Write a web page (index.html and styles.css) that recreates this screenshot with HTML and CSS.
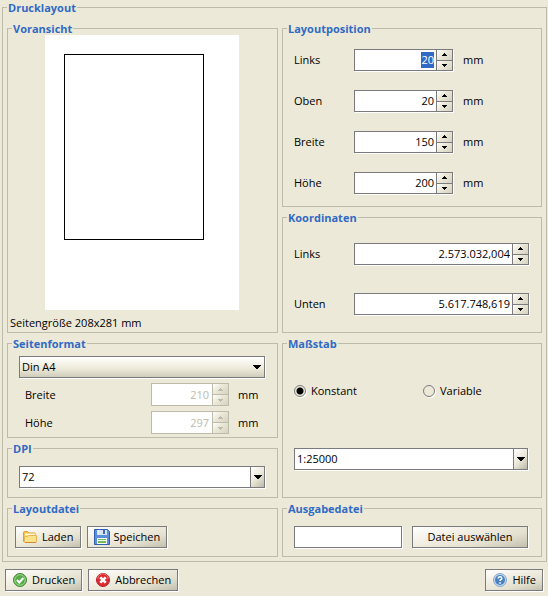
FILE: index.html
```html
<!DOCTYPE html>
<html lang="de">
<head>
<meta charset="utf-8">
<title>Drucklayout</title>
<link rel="stylesheet" href="styles.css">
</head>
<body>
<svg class="sprites" aria-hidden="true">
  <symbol id="up" viewBox="0 0 5 3"><path d="M2 0h1v1h1v1h1v1H0V2h1V1h1z"/></symbol>
  <symbol id="down" viewBox="0 0 5 3"><path d="M0 0h5v1H4v1H3v1H2V2H1V1H0z"/></symbol>
  <symbol id="drop" viewBox="0 0 8 4"><path d="M0 0h8v1H7v1H6v1H5v1H3V3H2V2H1V1H0z"/></symbol>
</svg>
<form class="dialog">
  <fieldset class="group outer">
    <legend>Drucklayout</legend>
    <div class="grid">
      <fieldset class="group preview">
        <legend>Voransicht</legend>
        <div class="sheet"><div class="frame"></div></div>
        <p class="size">Seitengröße 208x281 mm</p>
      </fieldset>

      <div class="stack">
        <fieldset class="group position">
          <legend>Layoutposition</legend>
          <div class="row"><label for="pl">Links</label><span class="spin"><input id="pl" value="20"><span class="steps"><button type="button" aria-label="mehr"><svg><use href="#up"/></svg></button><button type="button" aria-label="weniger"><svg><use href="#down"/></svg></button></span></span><span>mm</span></div>
          <div class="row"><label for="po">Oben</label><span class="spin"><input id="po" value="20"><span class="steps"><button type="button" aria-label="mehr"><svg><use href="#up"/></svg></button><button type="button" aria-label="weniger"><svg><use href="#down"/></svg></button></span></span><span>mm</span></div>
          <div class="row"><label for="pb">Breite</label><span class="spin"><input id="pb" value="150"><span class="steps"><button type="button" aria-label="mehr"><svg><use href="#up"/></svg></button><button type="button" aria-label="weniger"><svg><use href="#down"/></svg></button></span></span><span>mm</span></div>
          <div class="row"><label for="ph">Höhe</label><span class="spin"><input id="ph" value="200"><span class="steps"><button type="button" aria-label="mehr"><svg><use href="#up"/></svg></button><button type="button" aria-label="weniger"><svg><use href="#down"/></svg></button></span></span><span>mm</span></div>
        </fieldset>
        <fieldset class="group coords">
          <legend>Koordinaten</legend>
          <div class="row"><label for="kl">Links</label><span class="spin"><input id="kl" value="2.573.032,004"><span class="steps"><button type="button" aria-label="mehr"><svg><use href="#up"/></svg></button><button type="button" aria-label="weniger"><svg><use href="#down"/></svg></button></span></span></div>
          <div class="row"><label for="ku">Unten</label><span class="spin"><input id="ku" value="5.617.748,619"><span class="steps"><button type="button" aria-label="mehr"><svg><use href="#up"/></svg></button><button type="button" aria-label="weniger"><svg><use href="#down"/></svg></button></span></span></div>
        </fieldset>
      </div>

      <div class="stack">
        <fieldset class="group format">
          <legend>Seitenformat</legend>
          <div class="combo shaded"><select aria-label="Seitenformat"><option>Din A4</option></select><span class="arrow"><svg><use href="#drop"/></svg></span></div>
          <div class="row"><label for="fb">Breite</label><span class="spin off"><input id="fb" value="210" disabled><span class="steps"><button type="button" aria-label="mehr" disabled><svg><use href="#up"/></svg></button><button type="button" aria-label="weniger" disabled><svg><use href="#down"/></svg></button></span></span><span>mm</span></div>
          <div class="row"><label for="fh">Höhe</label><span class="spin off"><input id="fh" value="297" disabled><span class="steps"><button type="button" aria-label="mehr" disabled><svg><use href="#up"/></svg></button><button type="button" aria-label="weniger" disabled><svg><use href="#down"/></svg></button></span></span><span>mm</span></div>
        </fieldset>
        <fieldset class="group dpi">
          <legend>DPI</legend>
          <div class="combo"><select aria-label="DPI"><option>72</option></select><span class="arrow"><svg><use href="#drop"/></svg></span></div>
        </fieldset>
      </div>

      <fieldset class="group scale">
        <legend>Maßstab</legend>
        <div class="radios">
          <label><input type="radio" name="scale" checked>Konstant</label>
          <label><input type="radio" name="scale">Variable</label>
        </div>
        <div class="combo"><select aria-label="Maßstab"><option>1:25000</option></select><span class="arrow"><svg><use href="#drop"/></svg></span></div>
      </fieldset>

      <fieldset class="group files">
        <legend>Layoutdatei</legend>
        <div class="buttons">
          <button type="button" class="btn"><svg class="icon" viewBox="0 0 16 16">
            <path d="M1.500 12.500V3.500q0-1 1-1h3l1.500 1.500h6v8.500z" fill="#f3c44e" stroke="#e0a030"/>
            <path d="M3 5.500h10" stroke="#fff6d0" stroke-width="2"/>
            <path d="M2.500 7.500h3l1-1h8v6q0 1-1 1h-10q-1 0-1-1z" fill="#fbe28c" stroke="#e8b650"/>
            <path d="M3 13.500h11" stroke="#d98a2b"/></svg>Laden</button>
          <button type="button" class="btn"><svg class="icon" viewBox="0 0 16 16">
            <path d="M.5.5h13l2 2v13H.5z" fill="#5b8edb" stroke="#2f5fb0"/>
            <path d="M3 1h10v5H3z" fill="#d5e3f5"/><path d="M9 1h2v4H9z" fill="#3f6db5"/><path d="M4.500 1v4" stroke="#f4f8fd"/>
            <path d="M3 9h10v6H3z" fill="#f4f8f0"/><path d="M4 10h8v1H4zM4 12h8v2H4z" fill="#76b95a"/></svg>Speichen</button>
        </div>
      </fieldset>

      <fieldset class="group output">
        <legend>Ausgabedatei</legend>
        <div class="buttons">
          <input class="text" type="text" aria-label="Ausgabedatei">
          <button type="button" class="btn">Datei auswählen</button>
        </div>
      </fieldset>
    </div>
  </fieldset>

  <div class="footer">
    <button type="button" class="btn"><svg class="icon" viewBox="0 0 16 16">
      <circle cx="8" cy="8" r="6.500" fill="#58ab4b" stroke="#3c8b35"/><circle cx="8" cy="8" r="5.300" fill="none" stroke="#a2d68f"/>
      <path d="M5 8l2.300 2.500 4-4.500" fill="none" stroke="#fff" stroke-width="2"/></svg>Drucken</button>
    <button type="button" class="btn"><svg class="icon" viewBox="0 0 16 16">
      <circle cx="8" cy="8" r="6.500" fill="#dc2b32" stroke="#b81f28"/><path d="M2.800 7a5.200 5.200 0 0 1 10.400 0" fill="none" stroke="#ee7474"/>
      <path d="M5.300 5.300l5.400 5.400M10.700 5.300l-5.400 5.400" stroke="#fff" stroke-width="2.600"/></svg>Abbrechen</button>
    <button type="button" class="btn help"><svg class="icon" viewBox="0 0 16 16">
      <circle cx="8" cy="8" r="6.500" fill="#c3d7ec" stroke="#88a9cd"/><circle cx="8" cy="8" r="5" fill="#4b83bf"/>
      <path d="M6.200 6.600q0-1.800 1.800-1.800t1.800 1.500q0 .9-.9 1.400t-.9 1.400" fill="none" stroke="#fff" stroke-width="1.500"/><path d="M7.200 10.200h1.600v1.500H7.200z" fill="#fff"/></svg>Hilfe</button>
  </div>
</form>
<script src="script.js"></script>
</body>
</html>
```
FILE: styles.css
```css
* { box-sizing: border-box; }
body {
  margin: 0;
  background: #ece9d8;
  color: #000;
  font: 11px/16px "Open Sans", "Noto Sans", sans-serif;
}
input, select, button { font: inherit; color: inherit; margin: 0; border-radius: 0; outline: 0; }
.sprites { display: none; }
svg { display: block; }
.dialog { padding: 0 1px 0 2px; }

.group {
  --inset: 0px;
  margin: 0;
  padding: 0 0 0 var(--inset);
  border: 1px solid #bdbcaa;
  min-width: 0;
}
.group > legend {
  height: 15px;
  margin-left: calc(4px - var(--inset));
  padding: 0 1px;
  color: #316ac5;
  font-weight: 700;
  line-height: 15px;
}
.outer { --inset: 4px; padding: 6px 4px 4px var(--inset); }
.grid { display: grid; grid-template-columns: 271fr 260fr; gap: 3px 4px; }
.stack { display: flex; flex-direction: column; gap: 3px; }

.preview { padding-right: 1px; }
.sheet { width: 194px; height: 275px; margin: -1px auto 5px; padding: 19px; background: #fff; }
.frame { width: 140px; height: 186px; border: 1px solid #000; }
.size { margin: 0; padding: 0 2px 1px; }

.row { display: flex; align-items: center; }
.row label { flex: none; width: 60px; }
.position { --inset: 11px; display: flex; flex-direction: column; gap: 19px; padding: 13px 11px 12px var(--inset); }
.position .spin { width: 99px; margin-right: 10px; }
.coords { --inset: 11px; display: flex; flex-direction: column; gap: 28px; padding: 18px 12px 17px var(--inset); }
.coords .spin { flex: 1; }

.spin {
  display: flex;
  height: 22px;
  border: 1px solid #7b7b7d;
  background: #fff;
  box-shadow: 1px 1px #fff;
}
.spin input {
  flex: 1;
  min-width: 0;
  padding: 0 2px 0 0;
  border: 0;
  background: none;
  text-align: right;
}
.spin input::selection { background: #316ac5; color: #fff; }
.steps { display: flex; flex-direction: column; width: 16px; border-left: 1px solid #7b7b7d; }
.steps button {
  display: flex;
  flex: 1;
  align-items: center;
  justify-content: center;
  padding: 0;
  border: 0;
  background: linear-gradient(135deg, #fff, #ece9d8 40%, #d6d2c2);
}
.steps button + button { border-top: 1px solid #7b7b7d; }
.steps svg { width: 5px; height: 3px; }

.format { --inset: 11px; display: flex; flex-direction: column; gap: 5px; padding: 5px 12px 3px var(--inset); }
.format .row { padding-left: 6px; }
.format .row label { flex: 1; }
.format .spin { width: 78px; height: 23px; margin-right: 9px; }
.format .row > span:last-child { flex: none; width: 27px; }
.spin.off, .off .steps, .off .steps button { border-color: #bdbcaa; color: #bdbcaa; }
.spin.off { box-shadow: none; }
.off svg { fill: #bdbcaa; }
.off input { padding-right: 3px; }

.dpi { --inset: 11px; padding: 10px 12px 9px var(--inset); }
.combo { position: relative; height: 22px; border: 1px solid #7b7b7d; box-shadow: 1px 1px #fff; background: #fff; }
.combo select {
  display: block;
  width: 100%;
  height: 20px;
  padding: 0 20px 0 2px;
  border: 0;
  background: none;
  appearance: none;
}
.arrow {
  position: absolute;
  inset: 0 0 0 auto;
  display: flex;
  align-items: center;
  justify-content: center;
  width: 14px;
  border-left: 1px solid #7b7b7d;
  background: linear-gradient(135deg, #fff, #ece9d8 50%, #bdb9a8);
  pointer-events: none;
}
.arrow svg { width: 8px; height: 4px; }
.shaded { background: linear-gradient(#fff, #ece9d8 60%, #d0ccbc); }
.shaded .arrow { border: 0; background: none; }

.scale { --inset: 11px; display: flex; flex-direction: column; justify-content: space-between; padding: 32px 13px 27px var(--inset); }
.radios { display: grid; grid-template-columns: 129px 1fr; }
.radios label { display: flex; align-items: center; gap: 5px; }
.radios input {
  width: 12px;
  height: 12px;
  border: 1px solid #7b7b7d;
  border-radius: 50%;
  appearance: none;
  box-shadow: 1px 1px #fff;
}
.radios input:checked { background: radial-gradient(circle, #000 3px, transparent 4px); }

.files { --inset: 7px; padding: 10px 7px 8px var(--inset); }
.output { --inset: 11px; padding: 10px 13px 8px var(--inset); }
.buttons { display: flex; gap: 6px; }
.output .buttons { gap: 10px; }
.text { flex: 1; min-width: 0; height: 22px; border: 1px solid #7b7b7d; background: #fff; box-shadow: 1px 1px #fff; }
.output .btn { flex: none; width: 116px; }

.btn {
  display: flex;
  align-items: center;
  justify-content: center;
  gap: 4px;
  height: 22px;
  padding: 0 6px;
  border: 1px solid #7b7b7d;
  background: linear-gradient(165deg, #fff, #f0ede0 40%, #e4e0d0 70%, #c4c0ae);
  box-shadow: 1px 1px #fff;
  white-space: nowrap;
}
.icon { flex: none; width: 16px; height: 16px; }
.footer { display: flex; gap: 6px; padding: 7px 4px 4px 3px; }
.help { margin-left: auto; }
```
FILE: script.js
```js
const first = document.getElementById("pl");
first.focus();
first.select();
```
